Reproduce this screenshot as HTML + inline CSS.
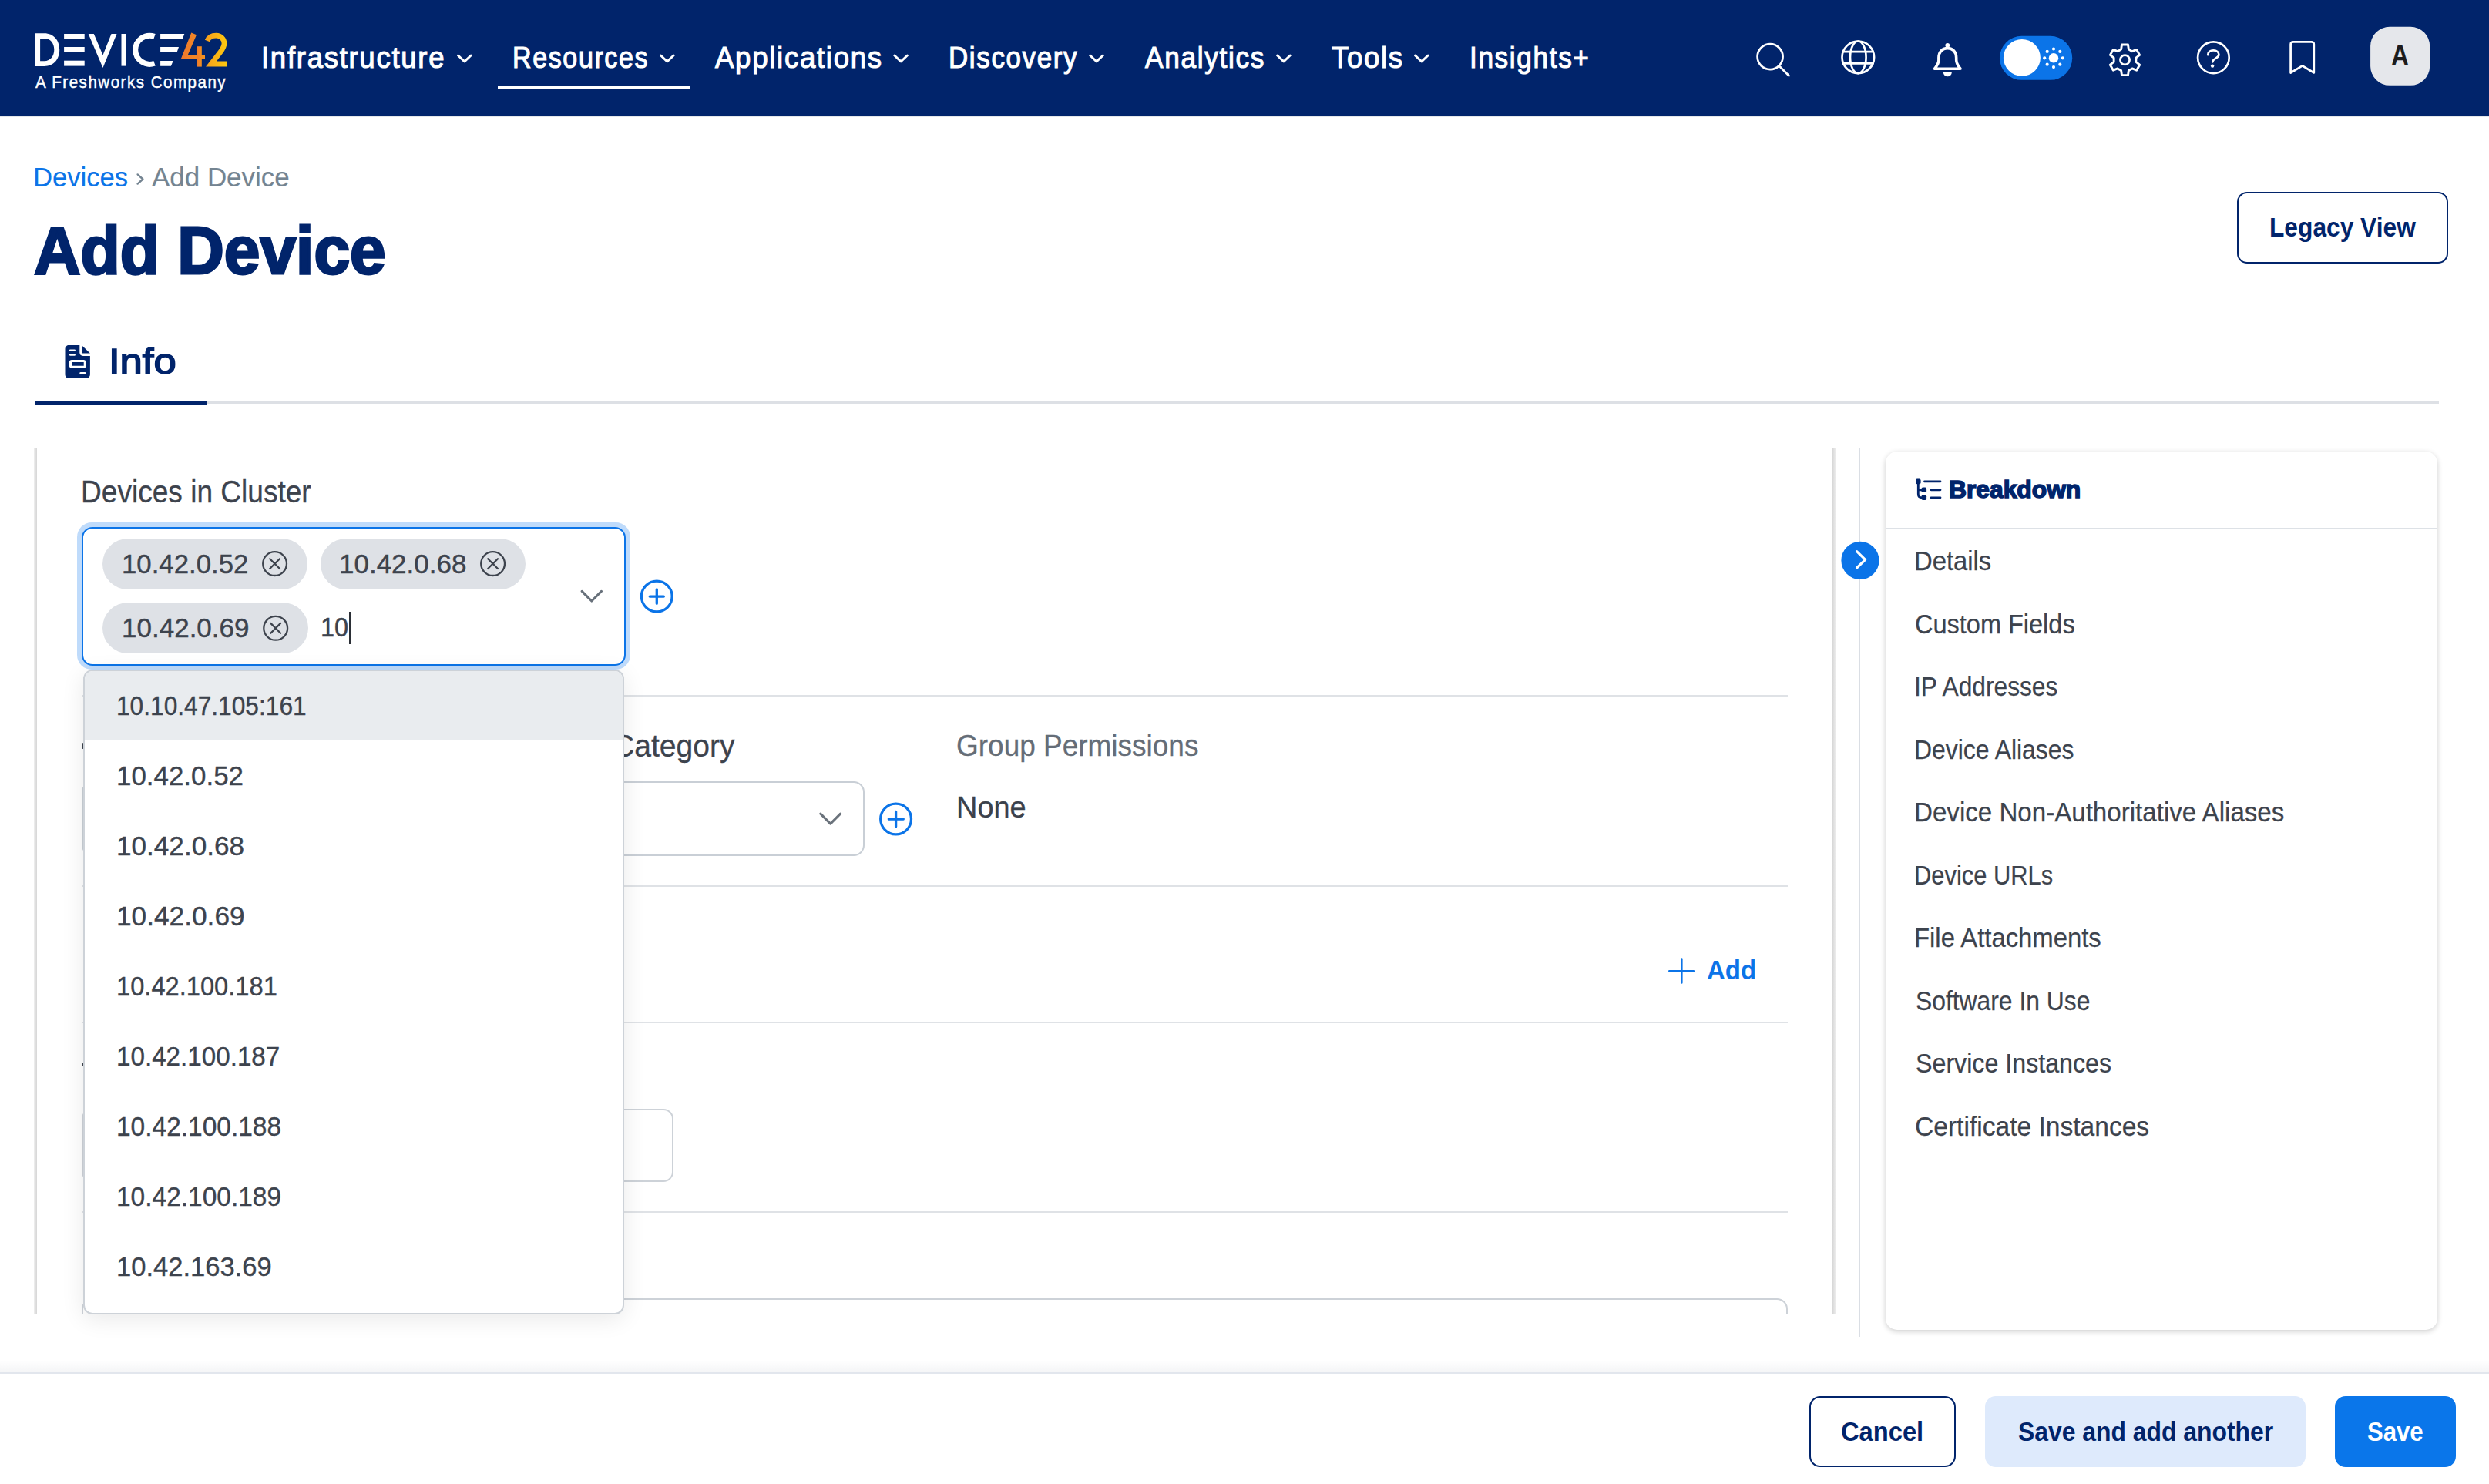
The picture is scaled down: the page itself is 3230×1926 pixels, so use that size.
<!DOCTYPE html>
<html><head><meta charset="utf-8"><title>Add Device</title><style>
html,body{margin:0;padding:0;width:3230px;height:1926px;overflow:hidden;background:#fff}
body{position:relative;font-family:"Liberation Sans",sans-serif}
.r{position:absolute;box-sizing:border-box}
.s{position:absolute;left:0;top:0;overflow:visible}
.t{position:absolute;white-space:nowrap;line-height:1;font-family:"Liberation Sans",sans-serif;transform-origin:0 0}
</style></head><body>
<div class="r" style="left:0px;top:0px;width:3230px;height:150px;background:#01246b"></div>
<div class="r" style="left:0px;top:150px;width:3230px;height:2px;background:#e4e7ea"></div>
<svg class="s" width="3230" height="150" viewBox="0 0 3230 150">
<defs>
<linearGradient id="g4" x1="0" y1="0" x2="1" y2="0"><stop offset="0" stop-color="#ee772e"/><stop offset="1" stop-color="#f3901f"/></linearGradient>
<linearGradient id="g2" x1="0" y1="0" x2="1" y2="0"><stop offset="0" stop-color="#f6a21c"/><stop offset="1" stop-color="#fdc90f"/></linearGradient>
</defs>
<path fill="#fff" fill-rule="evenodd" d="M45.1,43.2 H57.5 C69.5,43.2 77.2,52 77.2,64.5 C77.2,77 69.5,85.9 57.5,85.9 H45.1 Z M52.1,50.1 V79.3 H57.5 C65.5,79.3 70.3,73 70.3,64.6 C70.3,56.2 65.5,50.1 57.5,50.1 Z"/>
<rect fill="#fff" x="83.1" y="44" width="26.6" height="6.8"/>
<rect fill="#fff" x="83.1" y="61" width="26.6" height="6.5"/>
<rect fill="#fff" x="83.1" y="78.7" width="26.6" height="6.9"/>
<path fill="#fff" d="M114.7,44 H121.8 L133.5,71.4 L144.5,44 H151.5 L133.5,88.1 Z"/>
<rect fill="#fff" x="157.5" y="44" width="6.5" height="41.6"/>
<path fill="none" stroke="#fff" stroke-width="7" d="M200.5,47.4 A18.5,18.5 0 1 0 200.5,82.2"/>
<path fill="#fff" d="M208.1,44.1 H239.3 L236.8,50.7 H208.1 Z M208.1,61 H232 L229.7,67.4 H208.1 Z M208.1,78.9 H224.7 L221.9,85.8 H208.1 Z"/>
<path fill="url(#g4)" d="M248.3,42.5 L255,45.3 L243.8,71.2 H266 V76.5 H234.8 Z"/>
<rect fill="url(#g4)" x="255" y="60.2" width="6.8" height="26.4"/>
<path fill="none" stroke="url(#g2)" stroke-width="6.8" stroke-linejoin="miter" d="M269,53 C271,48 275.5,46.2 280.5,46.2 C286.5,46.2 291,50.5 291,56.5 C291,60.5 289,63.5 286,67.5 L274,83 H294.7"/>
</svg>
<div class="t" style="left:45.93px;top:95.80px;font-size:21.73px;font-weight:normal;transform:scaleX(0.9451);letter-spacing:1.6px;color:#fff;-webkit-text-stroke:0.45px #fff;">A Freshworks Company</div>
<div class="t" style="left:339.30px;top:55.63px;font-size:38.37px;font-weight:normal;transform:scaleX(0.9522);letter-spacing:1.8px;color:#fff;-webkit-text-stroke:1.1px #fff;">Infrastructure</div>
<div class="t" style="left:665.29px;top:55.63px;font-size:38.37px;font-weight:normal;transform:scaleX(0.8878);letter-spacing:1.8px;color:#fff;-webkit-text-stroke:1.1px #fff;">Resources</div>
<div class="t" style="left:928.35px;top:55.63px;font-size:38.37px;font-weight:normal;transform:scaleX(0.9534);letter-spacing:1.8px;color:#fff;-webkit-text-stroke:1.1px #fff;">Applications</div>
<div class="t" style="left:1231.12px;top:55.63px;font-size:38.37px;font-weight:normal;transform:scaleX(0.9108);letter-spacing:1.8px;color:#fff;-webkit-text-stroke:1.1px #fff;">Discovery</div>
<div class="t" style="left:1485.75px;top:55.63px;font-size:38.37px;font-weight:normal;transform:scaleX(0.9194);letter-spacing:1.8px;color:#fff;-webkit-text-stroke:1.1px #fff;">Analytics</div>
<div class="t" style="left:1727.78px;top:55.63px;font-size:38.37px;font-weight:normal;transform:scaleX(0.9518);letter-spacing:1.8px;color:#fff;-webkit-text-stroke:1.1px #fff;">Tools</div>
<div class="t" style="left:1906.50px;top:55.63px;font-size:38.37px;font-weight:normal;transform:scaleX(0.9166);letter-spacing:1.8px;color:#fff;-webkit-text-stroke:1.1px #fff;">Insights+</div>
<svg class="s" width="3230" height="150"><path fill="none" stroke="#fff" stroke-width="3" stroke-linecap="round" stroke-linejoin="round" d="M594.5,72 L602.8000000000001,79.8 L611.1,72 M857.5,72 L865.8000000000001,79.8 L874.1,72 M1160.8,72 L1169.1,79.8 L1177.4,72 M1414.7,72 L1423.0,79.8 L1431.3000000000002,72 M1657.6,72 L1665.8999999999999,79.8 L1674.2,72 M1836.5,72 L1844.8,79.8 L1853.1000000000001,72"/></svg>
<div class="r" style="left:646px;top:111px;width:249px;height:4px;background:#fff"></div>
<svg class="s" width="3230" height="150">
<g fill="none" stroke="#fff" stroke-width="2.7" stroke-linecap="round" stroke-linejoin="round">
<circle cx="2297.1" cy="73.6" r="16.5"/><path d="M2309.5,86.2 L2321.5,98.2"/>
<circle cx="2411.3" cy="74.3" r="20.8"/><ellipse cx="2411.3" cy="74.3" rx="10.3" ry="20.8"/><path d="M2392,67.1 H2430.6 M2392,82.4 H2430.6"/>
<path stroke-width="3.6" d="M2527.3,62.6 C2520,62.6 2515.9,68 2515.9,75 V78 C2515.9,83 2512.5,86.5 2510.6,89.2 H2544 C2542.1,86.5 2538.7,83 2538.7,78 V75 C2538.7,68 2534.6,62.6 2527.3,62.6 Z"/>
<path stroke-width="2.9" d="M2752.63,64.04 L2753.49,58.00 L2761.51,58.00 L2762.37,64.04 L2766.99,66.70 L2772.64,64.43 L2776.65,71.38 L2771.85,75.13 L2771.85,80.47 L2776.65,84.22 L2772.64,91.17 L2766.99,88.90 L2762.37,91.56 L2761.51,97.60 L2753.49,97.60 L2752.63,91.56 L2748.01,88.90 L2742.36,91.17 L2738.35,84.22 L2743.15,80.47 L2743.15,75.13 L2738.35,71.38 L2742.36,64.43 L2748.01,66.70 Z"/>
<circle cx="2757.5" cy="77.8" r="6.1"/>
<circle cx="2872.4" cy="74.75" r="20.3"/>
<path d="M2865.2,71.2 C2865.2,67.5 2868.3,65.3 2872.4,65.3 C2876.6,65.3 2879.4,67.8 2879.4,71 C2879.4,75.5 2871.4,75.8 2871.2,80.5"/>
<path d="M2972.6,94.5 V57.5 C2972.6,55.3 2973.8,54.3 2976,54.3 H2999.6 C3001.8,54.3 3002.8,55.3 3002.8,57.5 V94.5 L2987.8,85.3 Z"/>
</g>
<circle cx="2527.3" cy="58.8" r="2.9" fill="#fff"/>
<path d="M2521.9,93.9 H2532.8 A5.45,5.45 0 0 1 2521.9,93.9 Z" fill="#fff"/>
<circle cx="2871.1" cy="85.6" r="2.2" fill="#fff"/>
<rect x="2595" y="46.8" width="94.2" height="57" rx="28.5" fill="#0b74e8"/>
<circle cx="2623.9" cy="74.9" r="24" fill="#fff"/>
<circle cx="2665" cy="75.3" r="6.2" fill="#fff"/>
<circle cx="2676.80" cy="75.30" r="2.1" fill="#fff"/><circle cx="2673.34" cy="83.64" r="2.1" fill="#fff"/><circle cx="2665.00" cy="87.10" r="2.1" fill="#fff"/><circle cx="2656.66" cy="83.64" r="2.1" fill="#fff"/><circle cx="2653.20" cy="75.30" r="2.1" fill="#fff"/><circle cx="2656.66" cy="66.96" r="2.1" fill="#fff"/><circle cx="2665.00" cy="63.50" r="2.1" fill="#fff"/><circle cx="2673.34" cy="66.96" r="2.1" fill="#fff"/>
<rect x="3076.1" y="34.8" width="77.1" height="76" rx="25" fill="#e5e7eb"/>
</svg>
<div class="t" style="left:3102.60px;top:51.59px;font-size:39.54px;font-weight:bold;transform:scaleX(0.8057);color:#1c1c1c;">A</div>
<div class="t" style="left:43.07px;top:212.64px;font-size:34.81px;font-weight:normal;transform:scaleX(0.9954);color:#0b74e8;-webkit-text-stroke:0.15px #0b74e8;">Devices</div>
<svg class="s" width="400" height="300"><path d="M178.6,226.4 L185.4,232.5 L178.6,238.6" fill="none" stroke="#748491" stroke-width="2.4" stroke-linecap="round" stroke-linejoin="round"/></svg>
<div class="t" style="left:196.67px;top:212.64px;font-size:34.81px;font-weight:normal;transform:scaleX(1.0042);color:#748491;-webkit-text-stroke:0.15px #748491;">Add Device</div>
<div class="t" style="left:43.99px;top:281.72px;font-size:86.91px;font-weight:bold;transform:scaleX(0.9648);color:#01246b;-webkit-text-stroke:3px #01246b;">Add Device</div>
<div class="r" style="left:2903px;top:249px;width:274px;height:92.5px;border:2.6px solid #01246b;border-radius:13px"></div>
<div class="t" style="left:2945.02px;top:277.09px;font-size:35.18px;font-weight:bold;transform:scaleX(0.9017);color:#01246b;">Legacy View</div>
<svg class="s" width="400" height="560">
<path fill="#01246b" fill-rule="evenodd" d="M89.5,448 H103.3 V457.5 C103.3,460.3 105,461.9 107.8,461.9 H116.9 V486.1 C116.9,489 114.5,491.1 111.6,491.1 H89.5 C86.6,491.1 84.5,489 84.5,486.1 V453 C84.5,450.1 86.6,448 89.5,448 Z
M91.2,453.5 H96.7 A1.3,1.3 0 0 1 96.7,456.1 H91.2 A1.3,1.3 0 0 1 91.2,453.5 Z
M91.2,459.2 H96.7 A1.25,1.25 0 0 1 96.7,461.7 H91.2 A1.25,1.25 0 0 1 91.2,459.2 Z
M93,467 H108.5 C110.3,467 111.6,468.3 111.6,470.1 V474.8 C111.6,476.6 110.3,477.9 108.5,477.9 H93 C91.2,477.9 89.9,476.6 89.9,474.8 V470.1 C89.9,468.3 91.2,467 93,467 Z
M93,470.1 V474.8 H108.7 V470.1 Z
M104.7,483.1 H110.1 A1.45,1.45 0 0 1 110.1,486 H104.7 A1.45,1.45 0 0 1 104.7,483.1 Z"/>
<path fill="#01246b" d="M106.2,448.3 L116.9,458.6 H106.2 Z"/>
</svg>
<div class="t" style="left:141.09px;top:445.71px;font-size:46.51px;font-weight:normal;transform:scaleX(1.1310);color:#01246b;-webkit-text-stroke:1.6px #01246b;">Info</div>
<div class="r" style="left:268px;top:520px;width:2897px;height:4px;background:#dde0e5"></div>
<div class="r" style="left:45.8px;top:520.5px;width:222.2px;height:4.5px;background:#01246b"></div>
<div class="r" style="left:44px;top:582px;width:4.200000000000003px;height:1124px;background:linear-gradient(90deg,#eeeeee,#d6d6d6)"></div>
<div class="r" style="left:2378px;top:582px;width:5px;height:1124px;background:linear-gradient(90deg,#d6d6d6,#f2f2f2)"></div>
<div class="r" style="left:2412px;top:582px;width:2px;height:1153px;background:#dadee4"></div>
<div class="r" style="left:48px;top:582px;width:2330px;height:1124px;overflow:hidden">
<div class="r" style="left:-48px;top:-582px;width:3230px;height:1926px">
<div class="r" style="left:106px;top:902px;width:2214px;height:2px;background:#dfe2e6"></div>
<div class="r" style="left:106px;top:1149px;width:2214px;height:2px;background:#dfe2e6"></div>
<div class="r" style="left:106px;top:1326px;width:2214px;height:2px;background:#dfe2e6"></div>
<div class="r" style="left:106px;top:1572.3px;width:2214px;height:2.0px;background:#dfe2e6"></div>
<div class="r" style="left:106px;top:1014px;width:654px;height:96.5px;border:2px solid #c9cfd6;border-radius:14px"></div>
<div class="r" style="left:790px;top:1014px;width:332px;height:96.5px;border:2px solid #c9cfd6;border-radius:14px"></div>
<svg class="s" width="1300" height="1200"><path d="M1064.8,1056.2 L1077.7,1069.2 L1090.6,1056.2" fill="none" stroke="#6b737c" stroke-width="3.1" stroke-linecap="round" stroke-linejoin="round"/><g fill="none" stroke="#0b74e8" stroke-width="3.3" stroke-linecap="round"><circle cx="1162.6" cy="1063" r="19.9"/><path d="M1153.3,1063 H1172.3 M1162.6,1053.5 V1072.8"/></g></svg>
<div class="t" style="left:795.32px;top:947.53px;font-size:40.66px;font-weight:normal;transform:scaleX(0.9614);color:#3d434d;-webkit-text-stroke:0.3px #3d434d;">Category</div>
<div class="t" style="left:1241.42px;top:948.01px;font-size:39.46px;font-weight:normal;transform:scaleX(0.9371);color:#656d77;-webkit-text-stroke:0.3px #656d77;">Group Permissions</div>
<div class="t" style="left:1241.49px;top:1027.72px;font-size:39.68px;font-weight:normal;transform:scaleX(0.9561);color:#3b414b;-webkit-text-stroke:0.3px #3b414b;">None</div>
<svg class="s" width="2400" height="1400"><path d="M2166.3,1260.2 H2197.8 M2182.3,1244.6 V1275.4" fill="none" stroke="#0b74e8" stroke-width="2.6" stroke-linecap="round"/></svg>
<div class="t" style="left:2215.28px;top:1241.57px;font-size:35.69px;font-weight:bold;transform:scaleX(0.9244);color:#0b74e8;">Add</div>
<div class="r" style="left:106px;top:1439.2px;width:768px;height:94.79999999999995px;border:2px solid #cdd2d8;border-radius:13px"></div>
<div class="r" style="left:106px;top:1685.3px;width:2214px;height:214.70000000000005px;border:2px solid #cdd2d8;border-radius:14px"></div>
<div class="r" style="left:106.8px;top:963.6px;width:1.5px;height:8.699999999999932px;background:#3d434d;border-radius:1px"></div>
<div class="r" style="left:106.6px;top:1378.8px;width:1.6000000000000085px;height:4.0px;background:#3d434d"></div>
</div></div>
<div class="t" style="left:105.05px;top:618.50px;font-size:40.12px;font-weight:normal;transform:scaleX(0.9242);color:#3d434d;-webkit-text-stroke:0.3px #3d434d;">Devices in Cluster</div>
<div class="r" style="left:99.6px;top:677.9px;width:718.1px;height:191.5px;background:#bfdbfb;border-radius:19px"></div>
<div class="r" style="left:106px;top:684px;width:706.2px;height:179.79999999999995px;background:#fff;border:2.4px solid #0b74e8;border-radius:14px"></div>
<div class="r" style="left:133px;top:699px;width:266px;height:65.70000000000005px;background:#dee1e6;border-radius:33px"></div>
<div class="t" style="left:157.85px;top:714.58px;font-size:35.76px;font-weight:normal;transform:scaleX(0.9723);color:#3d434d;-webkit-text-stroke:0.45px #3d434d;">10.42.0.52</div>
<svg class="s" width="900" height="900"><g fill="none" stroke="#3d434d" stroke-width="2.3" stroke-linecap="round"><circle cx="356.6" cy="731.6" r="15.4"/><path d="M350.20000000000005,725.2 L363.0,738.0 M363.0,725.2 L350.20000000000005,738.0"/></g></svg>
<div class="r" style="left:416px;top:699px;width:266px;height:65.70000000000005px;background:#dee1e6;border-radius:33px"></div>
<div class="t" style="left:440.44px;top:714.58px;font-size:35.76px;font-weight:normal;transform:scaleX(0.9789);color:#3d434d;-webkit-text-stroke:0.45px #3d434d;">10.42.0.68</div>
<svg class="s" width="900" height="900"><g fill="none" stroke="#3d434d" stroke-width="2.3" stroke-linecap="round"><circle cx="639.6" cy="731.6" r="15.4"/><path d="M633.2,725.2 L646.0,738.0 M646.0,725.2 L633.2,738.0"/></g></svg>
<div class="r" style="left:133px;top:782.2px;width:266.9px;height:66.29999999999995px;background:#dee1e6;border-radius:33px"></div>
<div class="t" style="left:157.84px;top:796.87px;font-size:35.18px;font-weight:normal;transform:scaleX(0.9956);color:#3d434d;-webkit-text-stroke:0.45px #3d434d;">10.42.0.69</div>
<svg class="s" width="900" height="900"><g fill="none" stroke="#3d434d" stroke-width="2.3" stroke-linecap="round"><circle cx="357.7" cy="815.3" r="15.4"/><path d="M351.3,808.9 L364.09999999999997,821.6999999999999 M364.09999999999997,808.9 L351.3,821.6999999999999"/></g></svg>
<div class="t" style="left:415.99px;top:796.20px;font-size:35.97px;font-weight:normal;transform:scaleX(0.9045);color:#3d434d;-webkit-text-stroke:0.45px #3d434d;">10</div>
<div class="r" style="left:453px;top:793.9px;width:2.1999999999999886px;height:41.89999999999998px;background:#2b2f36"></div>
<svg class="s" width="900" height="900"><path d="M755.2,767.4 L767.8,780 L780.4,767.4" fill="none" stroke="#68717b" stroke-width="3.1" stroke-linecap="round" stroke-linejoin="round"/><g fill="none" stroke="#0b74e8" stroke-width="3.3" stroke-linecap="round"><circle cx="852.3" cy="774.1" r="19.9"/><path d="M843.2,774.1 H861.4 M852.3,764.9 V783.3"/></g></svg>
<div class="r" style="left:108px;top:869.3px;width:702px;height:837px;background:#fff;border:2px solid #cdd2d8;border-radius:12px;box-shadow:0 6px 30px rgba(0,0,0,0.09);overflow:hidden"><div class="r" style="left:0;top:0;width:700px;height:89.6px;background:#e9ecef"></div></div>
<div class="t" style="left:151.42px;top:898.51px;font-size:35.76px;font-weight:normal;transform:scaleX(0.8861);color:#3d434d;-webkit-text-stroke:0.4px #3d434d;">10.10.47.105:161</div>
<div class="t" style="left:151.22px;top:989.61px;font-size:35.76px;font-weight:normal;transform:scaleX(0.9763);color:#3d434d;-webkit-text-stroke:0.4px #3d434d;">10.42.0.52</div>
<div class="t" style="left:151.20px;top:1080.71px;font-size:35.76px;font-weight:normal;transform:scaleX(0.9823);color:#3d434d;-webkit-text-stroke:0.4px #3d434d;">10.42.0.68</div>
<div class="t" style="left:151.20px;top:1171.56px;font-size:35.76px;font-weight:normal;transform:scaleX(0.9860);color:#3d434d;-webkit-text-stroke:0.4px #3d434d;">10.42.0.69</div>
<div class="t" style="left:151.36px;top:1262.66px;font-size:35.76px;font-weight:normal;transform:scaleX(0.9134);color:#3d434d;-webkit-text-stroke:0.4px #3d434d;">10.42.100.181</div>
<div class="t" style="left:151.32px;top:1353.51px;font-size:35.76px;font-weight:normal;transform:scaleX(0.9285);color:#3d434d;-webkit-text-stroke:0.4px #3d434d;">10.42.100.187</div>
<div class="t" style="left:151.31px;top:1444.61px;font-size:35.76px;font-weight:normal;transform:scaleX(0.9365);color:#3d434d;-webkit-text-stroke:0.4px #3d434d;">10.42.100.188</div>
<div class="t" style="left:151.31px;top:1535.71px;font-size:35.76px;font-weight:normal;transform:scaleX(0.9365);color:#3d434d;-webkit-text-stroke:0.4px #3d434d;">10.42.100.189</div>
<div class="t" style="left:151.24px;top:1626.56px;font-size:35.76px;font-weight:normal;transform:scaleX(0.9659);color:#3d434d;-webkit-text-stroke:0.4px #3d434d;">10.42.163.69</div>
<div class="r" style="left:2446.7px;top:585.8px;width:716.5px;height:1140.2px;background:#fff;border-radius:15px;box-shadow:0 2px 7px rgba(0,0,0,0.2)"></div>
<div class="r" style="left:2446.7px;top:685px;width:716.5px;height:2px;background:#dde1e6"></div>
<svg class="s" width="3230" height="1000"><g fill="none" stroke="#01246b" stroke-width="2.8" stroke-linecap="round">
<path d="M2489.3,625 V641 C2489.3,644 2491,645.8 2494,645.8 H2496.8 M2489.3,635.8 H2496.8"/>
<path d="M2497.5,624.9 H2518 M2506,635.8 H2518 M2506,645.8 H2518"/></g>
<g fill="#01246b"><rect x="2486" y="621.6" width="6.6" height="6.6" rx="1.8"/><rect x="2493.5" y="632.5" width="6.6" height="6.6" rx="1.8"/><rect x="2493.5" y="642.5" width="6.6" height="6.6" rx="1.8"/></g>
<circle cx="2414" cy="727.4" r="24.6" fill="#0b74e8"/>
<path d="M2409.6,715.6 L2420.6,726.4 L2409.6,737" fill="none" stroke="#fff" stroke-width="3.2" stroke-linecap="round" stroke-linejoin="round"/>
</svg>
<div class="t" style="left:2529.11px;top:619.12px;font-size:31.98px;font-weight:bold;transform:scaleX(0.9940);color:#01246b;-webkit-text-stroke:1.6px #01246b;">Breakdown</div>
<div class="t" style="left:2484.06px;top:710.44px;font-size:35.10px;font-weight:normal;transform:scaleX(0.9352);color:#3d434d;-webkit-text-stroke:0.25px #3d434d;">Details</div>
<div class="t" style="left:2485.10px;top:791.99px;font-size:35.10px;font-weight:normal;transform:scaleX(0.9263);color:#3d434d;-webkit-text-stroke:0.25px #3d434d;">Custom Fields</div>
<div class="t" style="left:2484.14px;top:873.29px;font-size:35.10px;font-weight:normal;transform:scaleX(0.9045);color:#3d434d;-webkit-text-stroke:0.25px #3d434d;">IP Addresses</div>
<div class="t" style="left:2484.13px;top:955.09px;font-size:35.10px;font-weight:normal;transform:scaleX(0.9098);color:#3d434d;-webkit-text-stroke:0.25px #3d434d;">Device Aliases</div>
<div class="t" style="left:2484.04px;top:1036.39px;font-size:35.10px;font-weight:normal;transform:scaleX(0.9439);color:#3d434d;-webkit-text-stroke:0.25px #3d434d;">Device Non-Authoritative Aliases</div>
<div class="t" style="left:2484.21px;top:1118.19px;font-size:35.10px;font-weight:normal;transform:scaleX(0.8799);color:#3d434d;-webkit-text-stroke:0.25px #3d434d;">Device URLs</div>
<div class="t" style="left:2484.06px;top:1199.49px;font-size:35.10px;font-weight:normal;transform:scaleX(0.9362);color:#3d434d;-webkit-text-stroke:0.25px #3d434d;">File Attachments</div>
<div class="t" style="left:2485.63px;top:1281.29px;font-size:35.10px;font-weight:normal;transform:scaleX(0.9071);color:#3d434d;-webkit-text-stroke:0.25px #3d434d;">Software In Use</div>
<div class="t" style="left:2485.62px;top:1362.34px;font-size:35.10px;font-weight:normal;transform:scaleX(0.9178);color:#3d434d;-webkit-text-stroke:0.25px #3d434d;">Service Instances</div>
<div class="t" style="left:2485.05px;top:1444.39px;font-size:35.10px;font-weight:normal;transform:scaleX(0.9571);color:#3d434d;-webkit-text-stroke:0.25px #3d434d;">Certificate Instances</div>
<div class="r" style="left:0px;top:1765px;width:3230px;height:16px;background:linear-gradient(180deg,rgba(0,0,0,0),rgba(0,20,60,0.045))"></div>
<div class="r" style="left:0px;top:1781px;width:3230px;height:2px;background:#e2e6ed"></div>
<div class="r" style="left:0px;top:1783px;width:3230px;height:143px;background:#fff"></div>
<div class="r" style="left:2348px;top:1811.9px;width:189.9000000000001px;height:91.89999999999986px;border:2.6px solid #01246b;border-radius:14px"></div>
<div class="t" style="left:2389.28px;top:1840.13px;font-size:35.25px;font-weight:bold;transform:scaleX(0.9268);color:#01246b;">Cancel</div>
<div class="r" style="left:2576px;top:1811.9px;width:415.8000000000002px;height:91.89999999999986px;background:#deeafc;border-radius:14px"></div>
<div class="t" style="left:2618.50px;top:1840.57px;font-size:35.69px;font-weight:bold;transform:scaleX(0.8932);color:#01246b;">Save and add another</div>
<div class="r" style="left:3030.3px;top:1811.9px;width:156.39999999999964px;height:91.89999999999986px;background:#0a76ea;border-radius:14px"></div>
<div class="t" style="left:3072.31px;top:1840.57px;font-size:35.69px;font-weight:bold;transform:scaleX(0.8718);color:#fff;">Save</div>
</body></html>
